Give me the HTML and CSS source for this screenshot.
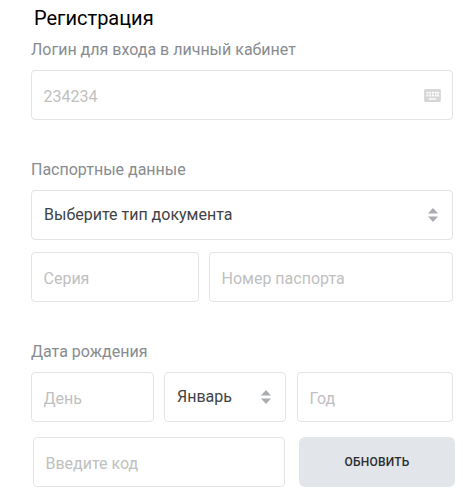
FILE: index.html
```html
<!DOCTYPE html>
<html lang="ru">
  <head>
    <meta charset="UTF-8" />
    <meta name="viewport" content="width=device-width, initial-scale=1.0" />
    <title>Регистрация</title>
    <link rel="stylesheet" href="styles.css">
  </head>
  <body>
    <form class="reg">
      <h1 class="title">Регистрация</h1>

      <div class="label label-login">Логин для входа в личный кабинет</div>
      <div class="field">
        <input class="inp" placeholder="234234" />
        <svg class="kb" width="17" height="13" viewBox="0 0 18 14">
          <rect x="0" y="0" width="18" height="14" rx="1.5" fill="#d6d6d6" />
          <g fill="#fff">
            <rect x="2.5" y="3" width="2" height="2" />
            <rect x="5.5" y="3" width="2" height="2" />
            <rect x="8.5" y="3" width="2" height="2" />
            <rect x="11.5" y="3" width="2" height="2" />
            <rect x="14" y="3" width="2" height="2" />
            <rect x="2.5" y="6" width="2" height="2" />
            <rect x="5.5" y="6" width="2" height="2" />
            <rect x="8.5" y="6" width="2" height="2" />
            <rect x="11.5" y="6" width="2" height="2" />
            <rect x="14" y="6" width="2" height="2" />
            <rect x="5" y="10" width="8" height="1.5" />
          </g>
        </svg>
      </div>

      <div class="label label-passport">Паспортные данные</div>
      <div class="field select">
        <span class="value">Выберите тип документа</span>
        <svg class="arrows" width="12" height="14" viewBox="0 0 12 14">
          <path d="M6 0 L11 5.5 L1 5.5 Z" fill="#a9acb0" />
          <path d="M1 8.5 L11 8.5 L6 14 Z" fill="#a9acb0" />
        </svg>
      </div>
      <div class="row">
        <div class="field w-series"><input class="inp" placeholder="Серия" /></div>
        <div class="field grow"><input class="inp" placeholder="Номер паспорта" /></div>
      </div>

      <div class="label label-date">Дата рождения</div>
      <div class="row">
        <div class="field w-day"><input class="inp" placeholder="День" /></div>
        <div class="field select w-month">
          <span class="value">Январь</span>
          <svg class="arrows" width="12" height="14" viewBox="0 0 12 14">
            <path d="M6 0 L11 5.5 L1 5.5 Z" fill="#a9acb0" />
            <path d="M1 8.5 L11 8.5 L6 14 Z" fill="#a9acb0" />
          </svg>
        </div>
        <div class="field grow year"><input class="inp" placeholder="Год" /></div>
      </div>

      <div class="row code-row">
        <div class="field w-code"><input class="inp" placeholder="Введите код" /></div>
        <button type="button" class="refresh">обновить</button>
      </div>
    </form>
  </body>
</html>
```

FILE: styles.css
```css
* {
  box-sizing: border-box;
}
body {
  margin: 0;
  background: white;
  font-family: Roboto, sans-serif;
}
.reg {
  width: 453px;
  padding-left: 31px;
}
.title {
  margin: 0 0 0 3px;
  padding-top: 8px;
  font-size: 20px;
  line-height: 21px;
  font-weight: 400;
  color: #000;
}
.label {
  font-size: 16px;
  line-height: 18px;
  color: #888b90;
}
.label-login {
  margin-top: 12px;
  margin-bottom: 11px;
}
.label-passport {
  margin-top: 41px;
  margin-bottom: 11px;
}
.label-date {
  margin-top: 41px;
  margin-bottom: 11px;
}
.field {
  display: flex;
  align-items: center;
  flex: none;
  min-width: 0;
  height: 50px;
  border: 1px solid #e3e4e6;
  border-radius: 4px;
  background: white;
}
.inp {
  flex: 1;
  min-width: 0;
  width: 100%;
  height: 100%;
  border: 0;
  outline: 0;
  background: transparent;
  padding: 2px 11.5px 0;
  font-family: inherit;
  font-size: 16px;
  color: #333;
}
.inp::placeholder {
  color: #c0c0c0;
  opacity: 1;
}
.kb {
  margin-right: 11px;
  flex-shrink: 0;
}
.select {
  justify-content: space-between;
  padding: 0 13px 0 12px;
}
.value {
  font-size: 16px;
  color: #404346;
  margin-top: -2px;
}
.row {
  display: flex;
  gap: 10px;
  margin-top: 12px;
}
.label + .row {
  margin-top: 0;
}
.grow {
  flex: 1 1 0;
}
.w-series {
  width: 168px;
}
.w-day {
  width: 123px;
}
.w-month {
  width: 122px;
}
.year {
  margin-left: 1px;
}
.code-row {
  margin-top: 15px;
  margin-left: 2px;
  margin-right: -2px;
  gap: 14px;
}
.w-code {
  width: 252px;
}
.refresh {
  flex: 1;
  height: 50px;
  border: 0;
  border-radius: 6px;
  background: #e2e5e9;
  color: #2b2d30;
  font-family: inherit;
  font-size: 12px;
  font-weight: 500;
  text-transform: uppercase;
  letter-spacing: 0.2px;
}
```
